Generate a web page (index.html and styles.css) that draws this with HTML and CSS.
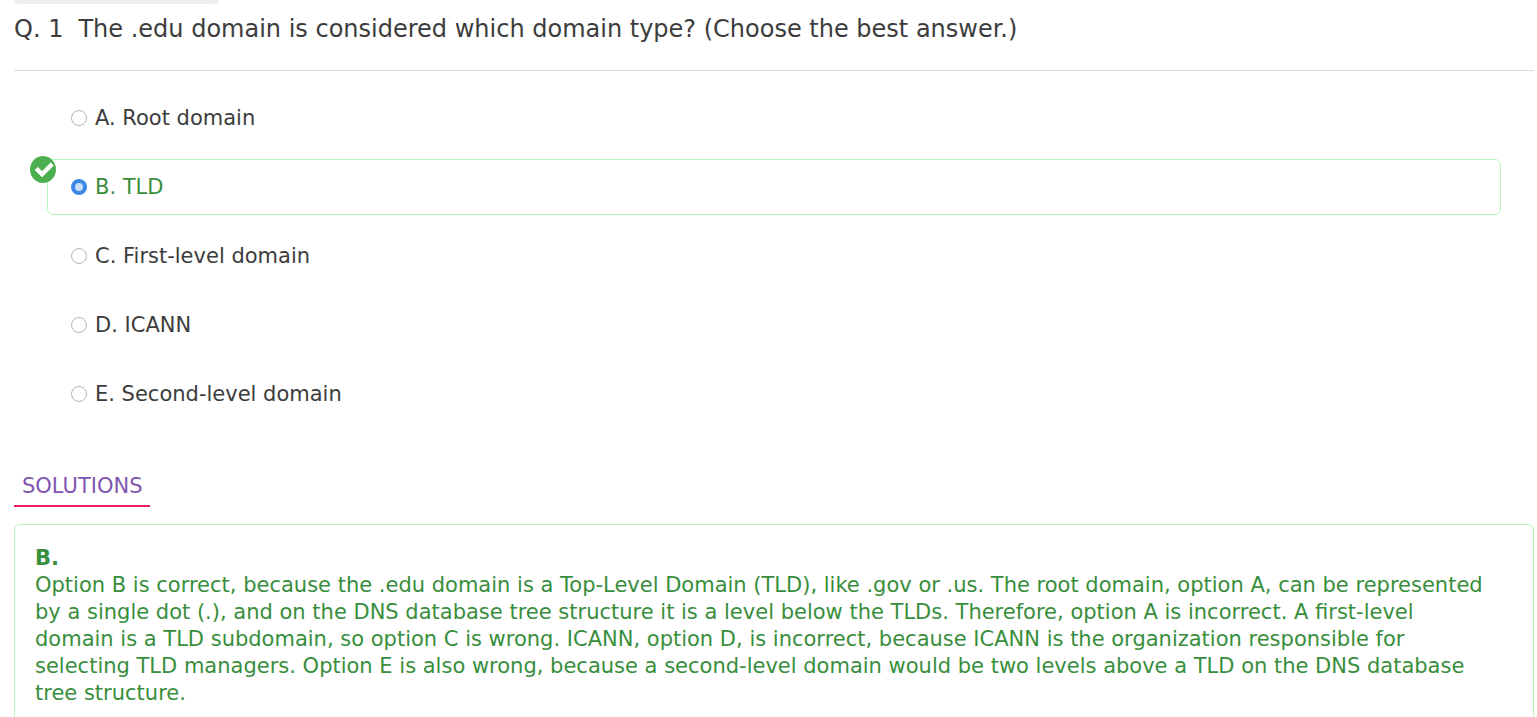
FILE: index.html
```html
<!DOCTYPE html>
<html lang="en">
<head>
<meta charset="utf-8">
<title>Question 1</title>
<link rel="stylesheet" href="styles.css">
</head>
<body>
<main class="quiz">
  <div class="tag"></div>
  <h1 class="question"><span class="number">Q. 1</span><span>The .edu domain is considered which domain type? (Choose the best answer.)</span></h1>
  <form class="options">
    <label class="option"><input type="radio" name="answer"><span>A. Root domain</span></label>
    <label class="option correct">
      <svg class="badge" viewBox="0 0 26 27" aria-hidden="true"><ellipse cx="13" cy="13.5" rx="13" ry="13.5" fill="#4caf50"/><path d="M5 14L7.800 11.200 12 15.400 20.800 6.800 23.500 9.600 12 21Z" fill="#fff" stroke="#fff" stroke-width="0.6" stroke-linejoin="round"/></svg>
      <input type="radio" name="answer" checked><span>B. TLD</span></label>
    <label class="option"><input type="radio" name="answer"><span>C. First-level domain</span></label>
    <label class="option"><input type="radio" name="answer"><span>D. ICANN</span></label>
    <label class="option"><input type="radio" name="answer"><span>E. Second-level domain</span></label>
  </form>
  <h2 class="solutions">SOLUTIONS</h2>
  <section class="solution">
    <strong>B.</strong>
    <p>Option B is correct, because the .edu domain is a Top-Level Domain (TLD), like .gov or .us. The root domain, option A, can be represented by a single dot (.), and on the DNS database tree structure it is a level below the TLDs. Therefore, option A is incorrect. A first-level domain is a TLD subdomain, so option C is wrong. ICANN, option D, is incorrect, because ICANN is the organization responsible for selecting TLD managers. Option E is also wrong, because a second-level domain would be two levels above a TLD on the DNS database tree structure.</p>
  </section>
</main>
</body>
</html>
```
FILE: styles.css
```css
* { box-sizing: border-box; }
html { overflow: hidden; }
body { margin: 0; background: #fff; color: #3c3c3c; font-family: "DejaVu Sans", sans-serif; font-size: 21px; line-height: 27px; }
.quiz { padding: 0 3px 0 14px; }
.tag { width: 205px; height: 4px; background: #eee; border-radius: 0 0 4px 4px; }
.question { display: flex; gap: 15px; margin: 0; padding: 9px 0 24px; border-bottom: 1px solid #dcdcdc; font-size: 24px; line-height: 33px; font-weight: 400; }
.options { display: flex; flex-direction: column; gap: 13px; margin: 19px 33px 0; }
.option { position: relative; display: flex; align-items: center; gap: 8px; height: 56px; padding: 0 23px; border: 1px solid transparent; border-radius: 6px; }
.option input { appearance: none; width: 16px; height: 16px; margin: 0; border: 1px solid #bab5b0; border-radius: 50%; background: #fff; }
.option input:checked { border: 4px solid #3d88e6; background: #cbdff8; }
.correct { border-color: #b2f8b2; color: #388e3c; }
.badge { position: absolute; left: -18px; top: -4px; width: 26px; height: 27px; }
.solutions { width: fit-content; margin: 51px 0 17px; padding: 0 8px 5px; border-bottom: 2px solid #e91e63; color: #8055b0; font-size: 21px; font-weight: 400; }
.solution { padding: 20px 38px 20px 20px; border: 1px solid #b2f8b2; border-radius: 6px; color: #388e3c; }
.solution p { margin: 0; }
```
